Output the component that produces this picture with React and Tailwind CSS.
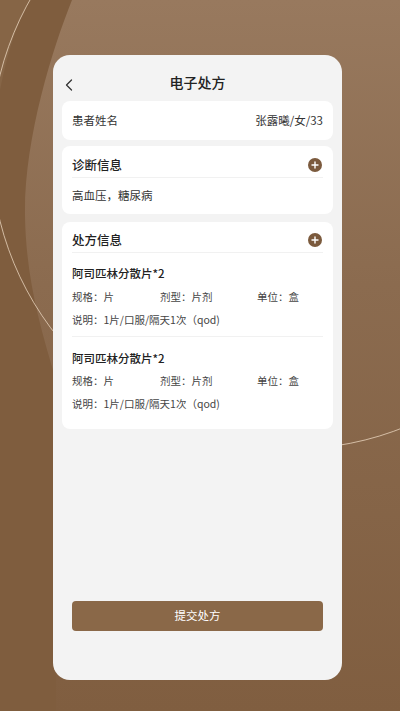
import { ChevronLeft } from "lucide-react";

const drugs = [
  { name: "阿司匹林分散片*2", spec: "片", form: "片剂", unit: "盒", note: "1片/口服/隔天1次（qod)" },
  { name: "阿司匹林分散片*2", spec: "片", form: "片剂", unit: "盒", note: "1片/口服/隔天1次（qod)" },
];

function PlusDot() {
  return (
    <svg width="14" height="14" viewBox="0 0 14 14">
      <circle cx="7" cy="7" r="7" fill="#7b5a3d" />
      <path d="M7 4v6M4 7h6" stroke="#fff" strokeWidth="1.4" strokeLinecap="round" />
    </svg>
  );
}

function Backdrop() {
  return (
    <svg className="absolute inset-0" width="400" height="711" viewBox="0 0 400 711">
      <defs>
        <linearGradient id="glow" x1="0" y1="0" x2="0" y2="1">
          <stop offset="0" stopColor="#98795e" />
          <stop offset="0.4" stopColor="#8b6b4f" />
          <stop offset="1" stopColor="#805e40" />
        </linearGradient>
      </defs>
      <rect width="400" height="711" fill="#7f5d3e" />
      <path d="M72 0 C52 50 24 140 25 215 C26 275 38 320 56 380 L56 711 L400 711 L400 0 Z" fill="url(#glow)" />
      <path d="M0 0 L30 0 Q12 30 0 90 Z" fill="#8a6a4d" opacity="0.6" />
      <circle cx="292" cy="148" r="301" fill="none" stroke="#ecd9c2" strokeWidth="0.9" opacity="0.85" />
    </svg>
  );
}

export default function App() {
  return (
    <div
      className="relative w-[400px] h-[711px] overflow-hidden"
      style={{ fontFamily: '"Noto Sans CJK SC", "Noto Sans", sans-serif' }}
    >
      <Backdrop />

      <div className="relative pt-[55px] pl-[53px]">
        <div className="w-[289px] h-[625px] rounded-[17px] bg-[#f3f3f3] flex flex-col px-[9px]">
          {/* header */}
          <div className="relative h-[46px] flex items-center justify-center">
            <ChevronLeft size={20} strokeWidth={1.5} className="absolute left-[-3px] top-[20px] text-[#333]" />
            <span className="mt-[9px] text-[14px] font-medium text-[#222]">电子处方</span>
          </div>

          {/* patient */}
          <div className="h-[39px] rounded-[8px] bg-white flex items-center justify-between px-[10px] text-[11.5px] text-[#333]">
            <span>患者姓名</span>
            <span>张露曦/女/33</span>
          </div>

          {/* diagnosis */}
          <div className="mt-[6px] rounded-[8px] bg-white px-[10px]">
            <div className="pt-[9px] pb-[2px] flex items-center justify-between border-b border-[#f1f1f1]">
              <span className="text-[12.5px] leading-[20px] font-medium text-[#222]">诊断信息</span>
              <span className="mr-[1px]"><PlusDot /></span>
            </div>
            <div className="pt-[8px] pb-[10px] text-[11.5px] leading-[18px] text-[#333]">高血压，糖尿病</div>
          </div>

          {/* prescription */}
          <div className="mt-[8px] rounded-[8px] bg-white px-[10px] pb-[16px]">
            <div className="pt-[8px] pb-[2px] flex items-center justify-between border-b border-[#f1f1f1]">
              <span className="text-[12.5px] leading-[20px] font-medium text-[#222]">处方信息</span>
              <span className="mr-[1px]"><PlusDot /></span>
            </div>
            {drugs.map((d, i) => (
              <div
                key={i}
                className={i === 0 ? "pt-[11px] pb-[7px] border-b border-[#f1f1f1]" : "pt-[12px]"}
              >
                <div className="text-[11.5px] leading-[18px] font-medium text-[#222]">{d.name}</div>
                <div className={`${i === 0 ? "mt-[6px]" : "mt-[5px]"} flex text-[10.5px] leading-[18px] text-[#444]`}>
                  <span className="w-[88px]">规格：{d.spec}</span>
                  <span className="w-[97px]">剂型：{d.form}</span>
                  <span>单位：{d.unit}</span>
                </div>
                <div className="mt-[5px] text-[10.5px] leading-[18px] text-[#444]">说明：{d.note}</div>
              </div>
            ))}
          </div>

          <button className="mt-auto mb-[49px] mx-[10px] h-[30px] rounded-[4px] bg-[#8a6848] text-white text-[11.5px]">
            提交处方
          </button>
        </div>
      </div>
    </div>
  );
}
